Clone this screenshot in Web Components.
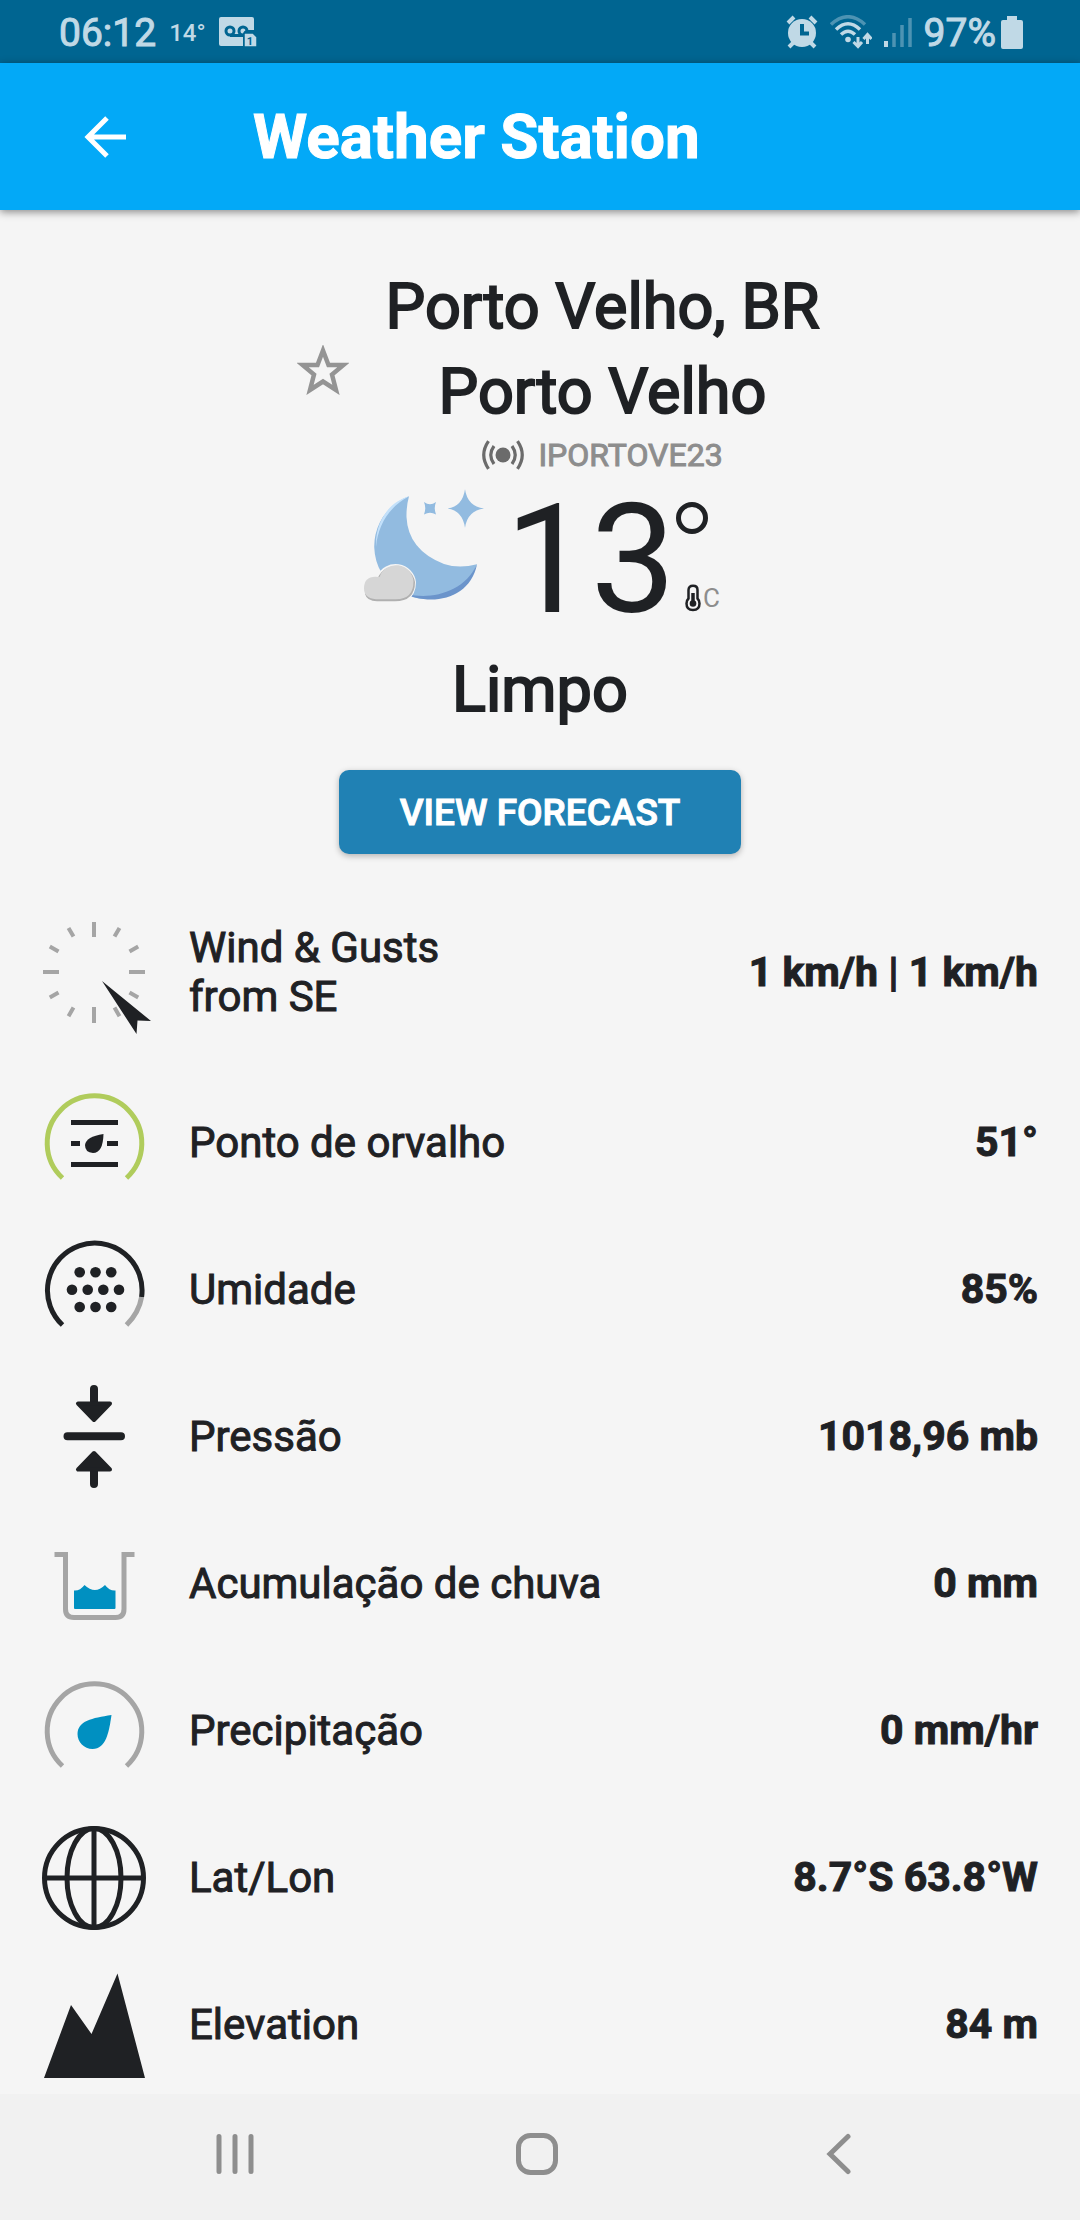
<!DOCTYPE html>
<html lang="pt-BR">
<head>
<meta charset="utf-8">
<meta name="viewport" content="width=device-width, initial-scale=1">
<title>Weather Station</title>
<style>
  html, body { margin: 0; }
  body {
    --ink: #1f2124;
    --gray: #a5a5a5;
    --muted: #8d8d8d;
    --blue: #0090c1;
    background: #f5f5f5;
    color: var(--ink);
    font-family: Roboto, "Liberation Sans", sans-serif;
  }
</style>
</head>
<body>
<weather-app></weather-app>

<script>
const define = (name, markup) => {
  const template = document.createElement('template');
  template.innerHTML = markup;
  customElements.define(name, class extends HTMLElement {
    constructor() {
      super();
      this.attachShadow({ mode: 'open' }).appendChild(template.content.cloneNode(true));
    }
  });
};

define('status-bar', `
<style>
  :host { display: flex; align-items: center; justify-content: space-between; height: 63px; padding: 0 57px 0 59px; background: #006591; color: #c0d9e6; }
  div { display: flex; align-items: center; }
  .clock, .level { font-size: 39px; line-height: 63px; font-weight: 400; padding-top: 3px; -webkit-text-stroke: 1px currentColor; }
  .outside { font-size: 24px; font-weight: 500; margin: 0 13px; padding-top: 3px; }
  .right { gap: 12px; }
  .power { gap: 5px; }
  svg { display: block; }
</style>
<div>
  <span class="clock">06:12</span>
  <span class="outside">14°</span>
  <svg width="38" height="32" viewBox="0 0 38 32" role="img" aria-label="Voicemail">
    <path fill="currentColor" d="M2 1H33q2 0 2 2V14H29q-5 0-5 5V30H2q-2 0-2-2V3q0-2 2-2Z"/>
    <g fill="none" stroke="#006591" stroke-width="3"><circle cx="11" cy="15" r="4"/><circle cx="24" cy="15" r="4"/><path d="M11 19.500H24"/></g>
    <path fill="currentColor" stroke="#006591" stroke-width="1.500" d="M25 18q0-1 1-1h8l4 4v10H25Z"/>
    <text x="31" y="29" text-anchor="middle" font-size="11" font-weight="700" fill="#006591">1</text>
  </svg>
</div>
<div class="right">
  <svg width="32" height="34" viewBox="0 0 32 34" role="img" aria-label="Alarm">
    <circle cx="16" cy="18" r="14" fill="currentColor"/>
    <path d="M2 8 8 2M30 8 24 2" stroke="currentColor" stroke-width="4"/>
    <path d="M8 27 3 32M24 27 29 32" stroke="currentColor" stroke-width="4"/>
    <path d="M16 9V18.500H23" fill="none" stroke="#006591" stroke-width="4"/>
  </svg>
  <svg width="42" height="34" viewBox="0 0 42 34" role="img" aria-label="Wi-Fi">
    <g fill="none" stroke="currentColor" stroke-width="3.500">
      <path opacity=".4" d="M1 9.500Q18-6 35 9.500"/>
      <path d="M6 14.500Q18 3 30 14.500"/>
      <path d="M11 19.500Q18 13 25 19.500"/>
    </g>
    <circle cx="18" cy="24.500" r="2.800" fill="currentColor"/>
    <path fill="none" stroke="currentColor" stroke-width="3" d="M28 22V30M23.500 27 28 31.500 32 27M37.500 29V20M33.500 24 37.500 19.500 41.500 24"/>
  </svg>
  <svg width="28" height="34" viewBox="0 0 28 34" role="img" aria-label="Signal">
    <path stroke="currentColor" stroke-width="4" d="M2 26V32"/>
    <path opacity=".4" stroke="currentColor" stroke-width="3.500" d="M10 18V32M18 10V32M26 3V32"/>
  </svg>
  <div class="power">
    <span class="level">97%</span>
    <svg width="22" height="34" viewBox="0 0 22 34" role="img" aria-label="Battery"><path fill="currentColor" d="M6 1h10v4h4q2 0 2 2V32q0 2-2 2H2q-2 0-2-2V7q0-2 2-2h4Z"/></svg>
  </div>
</div>`);

define('app-header', `
<style>
  :host { display: flex; align-items: center; height: 147px; padding-left: 52px; gap: 96px; background: #03a9f7; color: #fff; box-shadow: 0 2px 8px rgba(0,0,0,.45); }
  button { display: grid; place-items: center; width: 105px; height: 105px; padding: 0; border: 0; background: none; color: inherit; }
  h1 { margin: 0; font-size: 62px; line-height: 85px; font-weight: 700; -webkit-text-stroke: 1px currentColor; }
</style>
<button type="button" aria-label="Back">
  <svg width="42" height="42" viewBox="0 0 42 42"><path fill="none" stroke="currentColor" stroke-width="5" d="M42 21H4M23 2 4 21 23 40"/></svg>
</button>
<h1><slot></slot></h1>`);

define('station-title', `
<style>
  :host { display: flex; align-items: center; justify-content: center; }
  button { display: grid; place-items: center; width: 125px; height: 125px; padding: 0; border: 0; background: none; color: #949494; }
  div { text-align: center; }
  h2 { margin: 0; font-size: 63px; line-height: 85px; font-weight: 400; -webkit-text-stroke: 2px currentColor; }
  h2 ::slotted(span) { display: block; }
  p { display: flex; align-items: center; justify-content: center; gap: 14px; margin: 0; font-size: 32px; line-height: 42px; color: var(--muted); -webkit-text-stroke: 1px currentColor; }
</style>
<button type="button" aria-label="Favorite">
  <svg width="52" height="50" viewBox="0 0 52 50"><path fill="none" stroke="currentColor" stroke-width="4.500" d="M26 5.500 31.500 20H46.500L35 29.500 39 45 26 36.500 13 45 17 29.500 5.500 20H20.500Z"/></svg>
</button>
<div>
  <h2><slot name="city"></slot><slot name="name"></slot></h2>
  <p>
    <svg width="42" height="30" viewBox="0 0 42 30" aria-hidden="true">
      <circle cx="21" cy="15" r="7.500" fill="#6b6b6b"/>
      <path fill="none" stroke="#6b6b6b" stroke-width="3.200" d="M12 6q-6.500 9 0 18M30 6q6.500 9 0 18M6.500 1.200q-9.500 13.800 0 27.600M35.500 1.200q9.500 13.800 0 27.600"/>
    </svg>
    <slot name="id"></slot>
  </p>
</div>`);

define('current-conditions', `
<style>
  :host { display: block; text-align: center; }
  .now { display: flex; justify-content: center; height: 151px; padding-left: 4px; }
  .moon { margin: 13px 20px 0 0; }
  .degrees { font-size: 152px; line-height: 168px; }
  .side { display: flex; flex-direction: column; justify-content: space-between; align-items: flex-start; padding: 26px 0 15px; }
  .ring { box-sizing: border-box; width: 32px; height: 32px; border: 5px solid var(--ink); border-radius: 50%; }
  .unit { display: flex; align-items: center; gap: 2px; padding-left: 9px; font-size: 26px; line-height: 28px; color: var(--muted); }
  p { margin: 0; padding-top: 20px; font-size: 63px; line-height: 85px; font-weight: 400; -webkit-text-stroke: 2px currentColor; }
</style>
<div class="now">
  <svg class="moon" width="121" height="114" viewBox="0 0 121 114" role="img" aria-label="Clear night">
    <path fill="#92bbe0" d="M45 7.300A53 53 0 1 0 113 75.300Q95 80 80 75 44 61 42.500 28 42.300 17 45 7.300Z"/>
    <path fill="#c3e1fb" d="M45 7.300C25 13 11 33 12 58 14 36 25 18 45 7.300Z"/>
    <path fill="#6b94cb" d="M38 103.500C66 118 106 111 113 75.300 100 104 66 111 43 105Z"/>
    <path fill="#f5f5f5" d="M8 87H13A20.500 20.500 0 0 1 52 93Q52 106 43 112H0V96Z"/>
    <path fill="#b0b0b0" d="M14 88.500A19.500 19.500 0 0 1 51 93Q51 112.300 31 112.300H13Q3 112.300 1 105Z"/>
    <path fill="#d6d6d6" d="M15.500 88A17.500 17.500 0 0 1 49.500 92.500Q49.500 110 32 110.300H12Q0 109 0 99.500 0 87.500 12 87.800Q14.500 88 15.500 88Z"/>
    <path fill="#92bbe0" d="M101 .3Q103.500 17.500 120 19.400 103.500 21.500 101 38.700 98.500 21.500 83.600 19.400 98.500 17.500 101 .3ZM60 13Q66 17.500 72 13 69.500 19.300 72 25.500 66 22 60 25.500 62.500 19.300 60 13Z"/>
  </svg>
  <span class="degrees"><slot name="temp"></slot></span>
  <div class="side">
    <span class="ring" role="img" aria-label="degrees"></span>
    <span class="unit">
      <svg width="16" height="28" viewBox="0 0 16 28" aria-hidden="true">
        <path fill="none" stroke="var(--ink)" stroke-width="2.500" d="M3.500 14.500V6q0-4.200 4.500-4.200T12.500 6v8.500q2 2 2 5 0 6.500-6.500 6.500T1.500 19.500q0-3 2-5Z"/>
        <path stroke="var(--ink)" stroke-width="3.500" d="M8 9v9"/><circle cx="8" cy="19.500" r="3.300" fill="var(--ink)"/>
      </svg>
      <slot name="unit"></slot>
    </span>
  </div>
</div>
<p><slot name="sky"></slot></p>`);

define('primary-button', `
<style>
  :host { display: flex; justify-content: center; }
  button { height: 84px; padding: 2px 61px 0; border: 0; border-radius: 10px; background: #2081b4; color: #fff; box-shadow: 0 2px 6px rgba(0,0,0,.28); font: 500 37px/44px Roboto, "Liberation Sans", sans-serif; -webkit-text-stroke: 1px currentColor; }
</style>
<button type="button"><slot></slot></button>`);

define('reading-row', `
<style>
  :host { display: flex; align-items: center; gap: 41px; min-height: 120px; padding: 0 42px 0 40px; font-size: 42px; line-height: 49px; }
  :host([tall]) { min-height: 166px; }
  ::slotted(svg) { flex: none; overflow: visible; }
  .label { flex: 1; font-weight: 400; -webkit-text-stroke: 1px currentColor; }
  .value { font-size: 41px; font-weight: 700; text-align: right; -webkit-text-stroke: 1px currentColor; }
</style>
<slot name="icon"></slot>
<span class="label"><slot></slot></span>
<span class="value"><slot name="value"></slot></span>`);

define('system-nav', `
<style>
  :host { display: flex; height: 126px; padding: 0 90px 0 84px; background: #f1f1f1; color: #8e8e8e; }
  button { flex: 1; display: grid; place-items: center; padding: 0 0 6px; border: 0; background: none; color: inherit; }
  svg { fill: none; stroke: currentColor; stroke-width: 5; stroke-linecap: round; }
</style>
<button type="button" aria-label="Recent apps"><svg width="42" height="42" viewBox="0 0 42 42"><path d="M5 3.500v35M21 3.500v35M37 3.500v35"/></svg></button>
<button type="button" aria-label="Home"><svg width="42" height="42" viewBox="0 0 42 42"><rect x="2.500" y="2.500" width="37" height="37" rx="12"/></svg></button>
<button type="button" aria-label="Back"><svg width="42" height="42" viewBox="0 0 42 42"><path d="M30 3.500 12 21 30 38.500"/></svg></button>`);

define('weather-app', `
<style>
  :host { display: flex; flex-direction: column; min-height: 100vh; }
  main { flex: 1; padding: 54px 0 8px; }
  primary-button { padding: 38px 0 35px; }
  section { display: flex; flex-direction: column; gap: 27px; }
  app-header { position: relative; }
</style>
<status-bar></status-bar>
<app-header>Weather Station</app-header>
<main>
  <station-title><span slot="city">Porto Velho, BR</span><span slot="name">Porto Velho</span><span slot="id">IPORTOVE23</span></station-title>
  <current-conditions><span slot="temp">13</span><span slot="unit">C</span><span slot="sky">Limpo</span></current-conditions>
  <primary-button>VIEW FORECAST</primary-button>
  <section>
    <reading-row tall>
      <svg slot="icon" width="108" height="108" viewBox="0 0 108 108" aria-hidden="true">
        <g stroke="var(--gray)" stroke-width="4" fill="none">
          <path d="M54 4v15M54 89v16M3 54h16M89 54h16"/>
          <path d="M74.500 18.500l5-8.600M89.500 33.500l8.700-5M89.500 74.500l8.700 5M74.500 89.500l5 8.700M33.500 89.500l-5 8.700M18.500 74.500l-8.700 5M18.500 33.500l-8.700-5M33.500 18.500l-5-8.600"/>
        </g>
        <path fill="var(--ink)" d="M62 63 111 103 97.500 102.500 96.500 116Z"/>
      </svg>
      Wind &amp; Gusts<br>from SE<span slot="value">1 km/h | 1 km/h</span>
    </reading-row>
    <reading-row>
      <svg slot="icon" width="108" height="108" viewBox="0 0 108 108" aria-hidden="true">
        <path fill="none" stroke="#b0cc5c" stroke-width="5" d="M22.500 90A47.300 47.300 0 1 1 86.500 90"/>
        <path stroke="var(--ink)" stroke-width="5" d="M31 34.500H78M31 55.500H40M67 55.500H78M31 76.500H78"/>
        <path fill="var(--ink)" d="M63.500 46Q63 65 53 65 45 64.500 45 57 46 48.500 63.500 46Z"/>
      </svg>
      Ponto de orvalho<span slot="value">51°</span>
    </reading-row>
    <reading-row>
      <svg slot="icon" width="108" height="108" viewBox="0 0 108 108" aria-hidden="true">
        <path fill="none" stroke="var(--gray)" stroke-width="5" d="M101.600 62Q99 77.500 86.500 90"/>
        <path fill="none" stroke="var(--ink)" stroke-width="5" d="M22.500 90A47.300 47.300 0 1 1 101.600 62"/>
        <g fill="var(--ink)">
          <circle cx="39.700" cy="37.300" r="5.300"/><circle cx="55.500" cy="37.300" r="5.300"/><circle cx="71.200" cy="37.300" r="5.300"/>
          <circle cx="32" cy="54.700" r="5.300"/><circle cx="47.700" cy="54.700" r="5.300"/><circle cx="63.300" cy="54.700" r="5.300"/><circle cx="79" cy="54.700" r="5.300"/>
          <circle cx="39.700" cy="72" r="5.300"/><circle cx="55.500" cy="72" r="5.300"/><circle cx="71.200" cy="72" r="5.300"/>
        </g>
      </svg>
      Umidade<span slot="value">85%</span>
    </reading-row>
    <reading-row>
      <svg slot="icon" width="108" height="108" viewBox="0 0 108 108" aria-hidden="true">
        <g stroke="var(--ink)" stroke-linecap="round" stroke-linejoin="round" fill="var(--ink)">
          <path stroke-width="8" d="M54 7V22M54 87V102M27.500 54.300H81"/>
          <path stroke-width="4" d="M38 21.500H70L54 38ZM38 87.500H70L54 71Z"/>
        </g>
      </svg>
      Pressão<span slot="value">1018,96 mb</span>
    </reading-row>
    <reading-row>
      <svg slot="icon" width="108" height="108" viewBox="0 0 108 108" aria-hidden="true">
        <path fill="none" stroke="var(--gray)" stroke-width="5" d="M14.500 25.500H25.500V80q0 8.500 8.500 8.500H75.500q8.500 0 8.500-8.500V25.500H94.500"/>
        <path fill="var(--blue)" d="M34 61.500Q40 62 44.500 56 55 66 65 56 69.500 62 75.500 61.500V79q0 1-1 1H35q-1 0-1-1Z"/>
      </svg>
      Acumulação de chuva<span slot="value">0 mm</span>
    </reading-row>
    <reading-row>
      <svg slot="icon" width="108" height="108" viewBox="0 0 108 108" aria-hidden="true">
        <path fill="none" stroke="var(--gray)" stroke-width="5" d="M22.500 90A47.300 47.300 0 1 1 86.500 90"/>
        <path fill="var(--blue)" d="M71.500 39C69 56 66 73 52.500 73 44 73 37.500 66 37.500 58 37.500 45 52 42 71.500 39Z"/>
      </svg>
      Precipitação<span slot="value">0 mm/hr</span>
    </reading-row>
    <reading-row>
      <svg slot="icon" width="108" height="108" viewBox="0 0 108 108" aria-hidden="true">
        <g fill="none" stroke="var(--ink)" stroke-width="5"><circle cx="54" cy="55" r="49.500"/><ellipse cx="54" cy="55" rx="27" ry="49.500"/><path d="M54 5V105M4 55H104"/></g>
      </svg>
      Lat/Lon<span slot="value">8.7°S 63.8°W</span>
    </reading-row>
    <reading-row>
      <svg slot="icon" width="108" height="108" viewBox="0 0 108 108" aria-hidden="true">
        <path fill="var(--ink)" d="M4 108 31 35 51.500 64 77.500 3.500 105 108Z"/>
      </svg>
      Elevation<span slot="value">84 m</span>
    </reading-row>
  </section>
</main>
<system-nav></system-nav>`);
</script>
</body>
</html>
